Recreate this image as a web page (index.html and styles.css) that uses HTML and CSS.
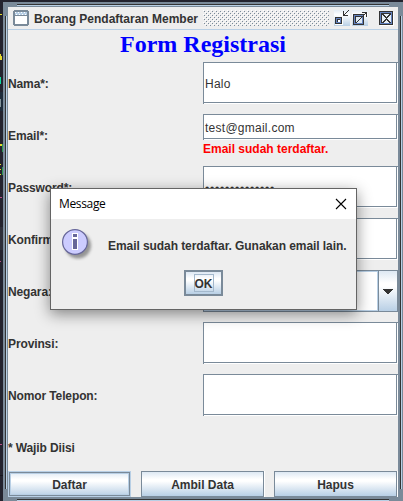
FILE: index.html
```html
<!DOCTYPE html>
<html lang="id">
<head>
<meta charset="utf-8">
<title>Borang Pendaftaran Member</title>
<link rel="stylesheet" href="styles.css">
</head>
<body>
<svg class="backdrop" width="3" height="501" shape-rendering="crispEdges">
  <path fill="#1e2c3b" d="M0 92h3v19H0z"/><path fill="#2d2f3a" d="M0 227h3v23H0z"/>
  <path fill="#e5d92c" d="M0 14h2v1H0zM0 54h1v2h1v4H0zM0 144h2v2H0zM0 164h1v1H0zM0 169h1v1H0zM0 174h1v1H0z"/>
  <path fill="#10d9a0" d="M0 77h1v7H0z"/><path fill="#83949b" d="M0 99h1v8H0z"/>
  <path fill="#259650" d="M2 144h1v8H2zM2 167h1v8H2z"/>
  <path fill="#b84f89" d="M0 197h2v1H0zM0 261h1v1H0zM0 444h2v1H0z"/><path fill="#15151c" d="M0 475h3v1H0z"/>
</svg>
<div class="frame">
  <i class="edge top"></i><i class="edge bottom"></i><i class="edge left"></i><i class="edge right"></i>
  <main class="content">
    <header class="titlebar">
      <svg class="app-icon" width="16" height="16" shape-rendering="crispEdges">
        <path fill="#7a8a99" d="M1 0h14v1h1v14h-1v1H1v-1H0V1h1z"/><path fill="#b8cfe5" d="M2 2h12v3H2z"/>
        <path fill="#fff" d="M2 6h12v8H2zM2 2h1v1H2zM5 2h1v1H5zM8 2h1v1H8zM11 2h1v1h-1zM3 4h1v1H3zM6 4h1v1H6zM9 4h1v1H9zM12 4h1v1h-1z"/>
      </svg>
      <span class="title">Borang Pendaftaran Member</span>
      <svg class="bumps" width="126" height="16" shape-rendering="crispEdges">
        <defs><pattern id="dots" width="4" height="4" patternUnits="userSpaceOnUse"><path fill="#fff" d="M0 0h1v1H0zM2 2h1v1H2z"/><path fill="#7a8a99" d="M1 1h1v1H1zM3 3h1v1H3z"/></pattern></defs>
        <rect width="126" height="16" fill="url(#dots)"/>
      </svg>
      <svg class="win-icon" width="16" height="16" shape-rendering="crispEdges">
        <defs><linearGradient id="blue" x2="0" y2="1"><stop stop-color="#e4ecf4"/><stop offset=".3" stop-color="#fff"/><stop offset="1" stop-color="#b8cfe5"/></linearGradient></defs>
        <rect width="16" height="16" fill="url(#blue)"/>
        <path fill="#333" d="M1 7h7v7H1z"/><path fill="#6382bf" d="M2 8h5v5H2z"/><path fill="#333" d="M3 9h3v3H3z"/><path fill="#fff" d="M4 10h2v2H4zM8 7h1v8H1v-1h7z"/><path fill="#333" d="M9 1h1v4h4v1H9zM11 3h1v1h-1zM12 2h1v1h-1zM13 1h1v1h-1zM10 4h1v1h-1zM14 0h1v1h-1z"/>
      </svg>
      <svg class="win-icon" width="16" height="16" shape-rendering="crispEdges">
        <rect width="16" height="16" fill="url(#blue)"/>
        <path fill="#333" d="M1 4h11v11H1z"/><path fill="#6382bf" d="M2 5h9v9H2z"/><path fill="#333" d="M3 6h7v7H3z"/><path fill="#dce8f3" d="M4 7h6v6H4z"/>
        <path fill="#333" d="M4 12h1v1H4zM5 11h1v1H5zM6 10h1v1H6zM7 9h1v1H7zM8 8h1v1H8zM9 7h1v1H9zM10 6h1v1h-1zM11 5h1v1h-1zM12 4h1v1h-1zM13 3h1v1h-1zM10 2h5v5h-1V3h-4z"/>
      </svg>
      <svg class="win-icon close-icon" width="15" height="15" shape-rendering="crispEdges">
        <path fill="#333" d="M0 0h14v14H0z"/><path fill="#6382bf" d="M1 1h12v12H1z"/><path fill="#333" d="M2 2h10v10H2z"/><path fill="#e6eef6" d="M3 3h9v9H3z"/><path fill="#fff" d="M14 1h1v14H1v-1h13z"/>
        <path fill="#333" d="M3 3h2v1h1v1h1v1h1V5h1V4h1V3h2v1h-1v1h-1v1H9v1H8v1h1v1h1v1h1v1h1v1h-2v-1H9v-1H8V9H7v1H6v1H5v1H3v-1h1v-1h1V9h1V8h1V7H6V6H5V5H4V4H3z"/>
      </svg>
    </header>
    <h1>Form Registrasi</h1>
    <form class="rows">
      <div class="row"><label>Nama*:</label><div class="field">Halo</div></div>
      <div class="row"><label>Email*:</label><div class="stack"><div class="field short">test@gmail.com</div><p class="error">Email sudah terdaftar.</p></div></div>
      <div class="row"><label>Password*:</label><div class="field password">••••••••••••••</div></div>
      <div class="row"><label>Konfirmasi:</label><div class="field"></div></div>
      <div class="row"><label>Negara:</label><div class="combo"><span class="value"></span><span class="arrow"><svg width="10" height="5" shape-rendering="crispEdges"><path fill="#333" d="M0 0h10v1H9v1H8v1H7v1H6v1H4V4H3V3H2V2H1V1H0z"/></svg></span></div></div>
      <div class="row"><label>Provinsi:</label><div class="field"></div></div>
      <div class="row"><label>Nomor Telepon:</label><div class="field"></div></div>
      <div class="row"><label>* Wajib Diisi</label></div>
    </form>
    <footer class="buttons"><div class="button primary">Daftar</div><div class="button">Ambil Data</div><div class="button">Hapus</div></footer>
  </main>
</div>
<section class="dialog">
  <header class="dialog-title"><span>Message</span><svg width="12" height="12"><path d="M1 1l10 10M11 1L1 11" fill="none" stroke="#000" stroke-width="1.1"/></svg></header>
  <div class="dialog-body">
    <svg class="info" width="32" height="32">
      <defs><filter id="soft" x="-30%" y="-30%" width="160%" height="160%"><feGaussianBlur stdDeviation="1.4"/></filter></defs>
      <circle cx="16" cy="16.5" r="13" fill="#777" opacity=".75" filter="url(#soft)"/>
      <circle cx="13" cy="13" r="12.4" fill="#ccccff" stroke="#666699" stroke-width="1.2"/>
      <path fill="#fff" d="M10 4h6v5h-6zM10 9h6v12h-6z"/><path fill="#666699" d="M11 5h4v3h-4zM11 10h4v10h-4z"/>
    </svg>
    <p>Email sudah terdaftar. Gunakan email lain.</p>
    <div class="ok"><span>OK</span></div>
  </div>
</section>
</body>
</html>
```
FILE: styles.css
```css
* { box-sizing: border-box; }
body { margin: 0; width: 403px; height: 501px; overflow: hidden; background: #23232e; color: #333; font: bold 12px/14px "Liberation Sans", Arial, sans-serif; padding: 2px 0 0 3px; }
.backdrop { position: absolute; left: 0; top: 0; }
.frame { position: relative; height: 499px; padding: 5px; background: #7a8a99; }
.edge { position: absolute; background: #333; }
.top, .bottom { left: 14px; width: 372px; height: 1px; box-shadow: 0 1px #b8cfe5; }
.top { top: 2px; }
.bottom { top: 497px; }
.left, .right { top: 14px; width: 1px; height: 473px; box-shadow: 1px 0 #b8cfe5; }
.left { left: 2px; }
.right { left: 397px; }
.content { width: 390px; height: 490px; background: #eee; display: flex; flex-direction: column; }
.titlebar { height: 23px; display: flex; align-items: flex-start; padding: 3px 4px 0 5px; border-bottom: 1px solid #b8cfe5; flex: none; }
.app-icon { flex: none; }
.title { width: 174px; flex: none; padding: 2px 0 0 5px; white-space: nowrap; }
.bumps { margin-right: 5px; flex: none; }
.win-icon { margin-right: 2px; flex: none; }
.close-icon { margin: 1px 0 0 9px; }
h1 { margin: 0; height: 32px; color: #00f; font: bold 24px/29px "Liberation Serif", "Times New Roman", serif; text-align: center; }
.rows { display: flex; flex-direction: column; gap: 10px; }
.row { display: grid; grid-template-columns: 195px 195px; height: 42px; align-items: center; }
label { padding-top: 2px; letter-spacing: -.12px; }
.field { height: 42px; display: flex; align-items: center; padding: 0 0 0 1px; background: #fff; border: 1px solid #7a8a99; border-right: 0; border-bottom: 0; box-shadow: inset -1px -1px #fff, inset -2px -2px #7a8a99; font-weight: 400; letter-spacing: .26px; }
.short { height: 26px; }
.password { letter-spacing: .8px; padding-top: 2px; }
.error { margin: 2px 0 0; color: #f00; }
.combo { height: 42px; display: flex; background: #fff; border: 1px solid #7a8a99; box-shadow: inset 0 1px #b8cfe5, inset 0 -1px #b8cfe5; }
.value { flex: 1; border-right: 1px solid #b8cfe5; }
.arrow { width: 19px; border-left: 1px solid #7a8a99; display: flex; align-items: center; justify-content: center; }
.arrow, .button, .ok { background: linear-gradient(#dde8f3, #fff 30%, #fff 38%, #b8cfe5); }
.buttons { display: flex; gap: 10px; margin-top: 3px; }
.button { width: 123px; height: 26px; display: flex; align-items: center; justify-content: center; padding: 2px 0 0; border: 1px solid #7a8a99; box-shadow: 1px 0 #fff; }
.button:last-child { width: 123px; }
.primary { border-color: #b8cfe5; box-shadow: inset 0 0 0 1px #7a8a99, inset 0 0 0 2px #b8cfe5; }
.dialog { position: absolute; left: 50px; top: 188px; width: 307px; height: 122px; border: 1px solid #646464; background: #eee; box-shadow: 0 4px 14px rgba(0,0,0,.45); }
.dialog-title { height: 30px; background: #fff; color: #000; display: flex; justify-content: space-between; align-items: center; padding: 0 9px 0 8px; font: 12px/16px "Open Sans", "Noto Sans", sans-serif; letter-spacing: -.35px; }
.dialog-body { display: grid; grid-template-columns: 46px 1fr; padding: 10px 0 0 11px; }
.dialog-body p { margin: 10px 0 0; white-space: nowrap; letter-spacing: -.07px; }
.ok { grid-column: 1 / -1; margin: 9px 0 0 122px; width: 39px; height: 26px; border: 2px solid #7a8a99; display: flex; justify-content: center; align-items: center; }
.ok span { border: 1px solid #a3b8cc; height: 18px; padding-top: 2px; }
```
